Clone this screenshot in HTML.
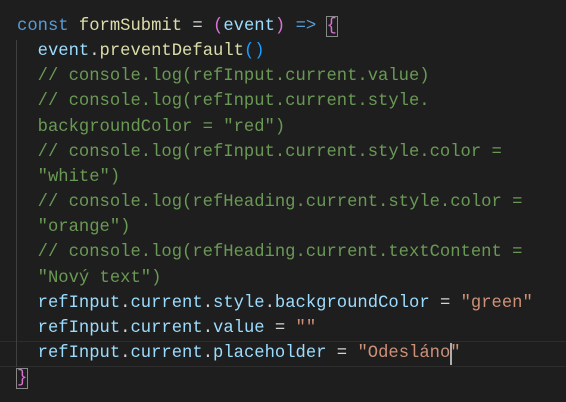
<!DOCTYPE html>
<html><head><style>
html,body{margin:0;padding:0;background:#1e1e1e;width:566px;height:402px;overflow:hidden}
pre{margin:0;position:absolute;left:17px;top:14px;font-family:"Liberation Mono",monospace;font-size:17.2px;line-height:25.15px;color:#d4d4d4}
.k{color:#569cd6}.f{color:#dcdcaa}.v{color:#9cdcfe}.c{color:#6a9955}.s{color:#ce9178}.p{color:#da70d6}.b{color:#179fff}
.box{outline:1px solid #888;outline-offset:0}
.guide{position:absolute;left:16px;top:40px;width:1px;height:327px;background:#404040}
.cur{position:absolute;left:0;top:341px;width:566px;height:24px;border-top:1px solid #2c2c2c;border-bottom:1px solid #2c2c2c}
.caret{position:absolute;left:450px;top:343px;width:2px;height:22px;background:#aeafad}
</style></head><body>
<div class="cur"></div><div class="guide"></div>
<pre><span class="k">const</span> <span class="f">formSubmit</span> = <span class="p">(</span><span class="v">event</span><span class="p">)</span> <span class="k">=&gt;</span> <span class="p box">{</span>
  <span class="v">event</span>.<span class="f">preventDefault</span><span class="b">()</span>
  <span class="c">// console.log(refInput.current.value)</span>
  <span class="c">// console.log(refInput.current.style.</span>
  <span class="c">backgroundColor = "red")</span>
  <span class="c">// console.log(refInput.current.style.color =</span>
  <span class="c">"white")</span>
  <span class="c">// console.log(refHeading.current.style.color =</span>
  <span class="c">"orange")</span>
  <span class="c">// console.log(refHeading.current.textContent =</span>
  <span class="c">"Nový text")</span>
  <span class="v">refInput</span>.<span class="v">current</span>.<span class="v">style</span>.<span class="v">backgroundColor</span> = <span class="s">"green"</span>
  <span class="v">refInput</span>.<span class="v">current</span>.<span class="v">value</span> = <span class="s">""</span>
  <span class="v">refInput</span>.<span class="v">current</span>.<span class="v">placeholder</span> = <span class="s">"Odesláno"</span>
<span class="p box">}</span></pre>
<div class="caret"></div>
</body></html>
